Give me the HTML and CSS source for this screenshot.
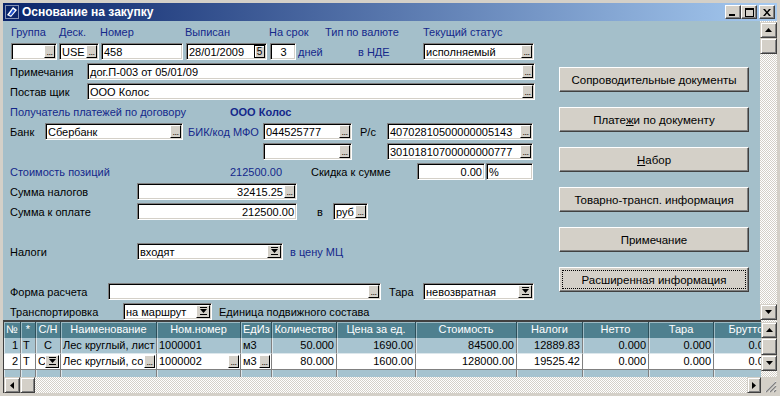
FILE: index.html
```html
<!DOCTYPE html>
<html lang="ru">
<head>
    <meta charset="UTF-8">
    <title>Основание на закупку</title>
    <link rel="stylesheet" href="styles.css">
</head>
<body>
<div class="window">
    <div class="titlebar">
        <svg class="title-icon" width="16" height="16" viewBox="0 0 16 16">
            <rect width="16" height="16" fill="#0a246a"/>
            <rect x="1.5" y="1.5" width="13" height="13" fill="none" stroke="#fff" stroke-dasharray="1 1"/>
            <path d="M3 11 L9 3 L13 6 L7 13 Z" fill="#fff"/>
            <path d="M5 11 L9 5 L11 6.5 L7 11.5 Z" fill="#2050c8"/>
        </svg>
        <span class="title-text">Основание на закупку</span>
        <div class="title-btn"><svg width="8" height="8" viewBox="0 0 8 8"><rect x="0" y="6" width="6" height="2"/></svg></div>
        <div class="title-btn"><svg width="9" height="9" viewBox="0 0 9 9"><path d="M0 0h9v9h-9z M1 2v6h7v-6z" fill-rule="evenodd"/></svg></div>
        <div class="title-btn close"><svg width="8" height="7" viewBox="0 0 8 7"><path d="M0 0h2l2 2.5 2-2.5h2l-3 3.5 3 3.5h-2l-2-2.5-2 2.5h-2l3-3.5z"/></svg></div>
    </div>

    <div class="client">
        <div class="upper">
            <div class="form">
                <div class="row">
                    <span class="lbl blue hl-group">Группа</span>
                    <span class="lbl blue hl-desk">Деск.</span>
                    <span class="lbl blue hl-num">Номер</span>
                    <span class="lbl blue hl-date">Выписан</span>
                    <span class="lbl blue hl-term">На срок</span>
                    <span class="lbl blue hl-cur">Тип по валюте</span>
                    <span class="lbl blue">Текущий статус</span>
                </div>
                <div class="row">
                    <div class="field in-group"><span class="val"></span><span class="dots">...</span></div>
                    <div class="field in-desk"><span class="val">USE</span><span class="dots">...</span></div>
                    <div class="field in-num"><span class="val">458</span></div>
                    <div class="field in-date"><span class="val">28/01/2009</span><span class="cal">5</span></div>
                    <div class="field in-term center"><span class="val">3</span></div>
                    <span class="lbl blue lbl-days">дней</span>
                    <span class="lbl blue lbl-nde">в НДЕ</span>
                    <div class="field in-status"><span class="val">исполняемый</span><span class="dots">...</span></div>
                </div>
                <div class="row">
                    <span class="lbl lbl-side">Примечания</span>
                    <div class="field in-wide"><span class="val">дог.П-003 от 05/01/09</span><span class="dots">...</span></div>
                </div>
                <div class="row">
                    <span class="lbl lbl-side">Постав щик</span>
                    <div class="field in-wide"><span class="val">ООО Колос</span><span class="dots">...</span></div>
                </div>
                <div class="row">
                    <span class="lbl blue lbl-payee">Получатель платежей по договору</span>
                    <span class="lbl blue strong">ООО Колос</span>
                </div>
                <div class="row">
                    <span class="lbl lbl-bank">Банк</span>
                    <div class="field in-bank"><span class="val">Сбербанк</span><span class="dots">...</span></div>
                    <span class="lbl blue lbl-bik">БИК/код МФО</span>
                    <div class="field in-bik"><span class="val">044525777</span><span class="dots">...</span></div>
                    <span class="lbl lbl-rs">Р/с</span>
                    <div class="field in-acc"><span class="val">40702810500000005143</span><span class="dots">...</span></div>
                </div>
                <div class="row">
                    <span class="pad-bik"></span>
                    <div class="field in-bik"><span class="val"></span><span class="dots">...</span></div>
                    <span class="gap-acc"></span>
                    <div class="field in-acc"><span class="val">30101810700000000777</span><span class="dots">...</span></div>
                </div>
                <div class="row">
                    <span class="lbl blue lbl-cost">Стоимость позиций</span>
                    <span class="lbl blue cost-value">212500.00</span>
                    <span class="lbl lbl-disc">Скидка к сумме</span>
                    <div class="field in-disc right"><span class="val">0.00</span></div>
                    <div class="field in-pct"><span class="val">%</span></div>
                </div>
                <div class="row">
                    <span class="lbl lbl-sum">Сумма налогов</span>
                    <div class="field in-sum right"><span class="val">32415.25</span><span class="dots">...</span></div>
                </div>
                <div class="row">
                    <span class="lbl lbl-sum">Сумма к оплате</span>
                    <div class="field in-sum right"><span class="val">212500.00</span></div>
                    <span class="lbl lbl-in">в</span>
                    <div class="field in-cur"><span class="val">руб</span><span class="dots">...</span></div>
                </div>
                <div class="row"></div>
                <div class="row">
                    <span class="lbl lbl-sum">Налоги</span>
                    <div class="field sel-tax"><span class="val">входят</span><span class="drop"><svg width="7" height="9" viewBox="0 0 7 9"><rect width="7" height="1"/><path d="M0 2h7l-3.5 4z"/><rect y="7" width="7" height="1"/></svg></span></div>
                    <span class="lbl blue lbl-mc">в цену МЦ</span>
                </div>
                <div class="row"></div>
                <div class="row">
                    <span class="lbl lbl-form">Форма расчета</span>
                    <div class="field in-form"><span class="val"></span><span class="dots">...</span></div>
                    <span class="lbl lbl-tara">Тара</span>
                    <div class="field sel-tara"><span class="val">невозвратная</span><span class="drop"><svg width="7" height="9" viewBox="0 0 7 9"><rect width="7" height="1"/><path d="M0 2h7l-3.5 4z"/><rect y="7" width="7" height="1"/></svg></span></div>
                </div>
                <div class="row">
                    <span class="lbl lbl-trans">Транспортировка</span>
                    <div class="field sel-trans"><span class="val">на маршрут</span><span class="drop"><svg width="7" height="9" viewBox="0 0 7 9"><rect width="7" height="1"/><path d="M0 2h7l-3.5 4z"/><rect y="7" width="7" height="1"/></svg></span></div>
                    <span class="lbl lbl-unit">Единица подвижного состава</span>
                </div>
            </div>

            <div class="actions">
                <div class="btn">Сопроводительные документы</div>
                <div class="btn">Плате<u>ж</u>и по документу</div>
                <div class="btn"><u>Н</u>абор</div>
                <div class="btn">Товарно-трансп. информация</div>
                <div class="btn">Примечание</div>
                <div class="btn focused">Расширенная информация</div>
            </div>

            <div class="vscroll checker">
                <div class="sb-btn"><svg width="7" height="4" viewBox="0 0 7 4"><path d="M3.5 0L7 4H0z"/></svg></div>
                <div class="sb-thumb"></div>
                <div class="sb-space"></div>
                <div class="sb-btn"><svg width="7" height="4" viewBox="0 0 7 4"><path d="M0 0h7L3.5 4z"/></svg></div>
            </div>
        </div>

        <div class="grid">
            <div class="grid-main">
                <div class="grow grid-head">
                    <div>№</div><div>*</div><div>С/Н</div><div>Наименование</div><div>Ном.номер</div><div>ЕдИз</div><div>Количество</div><div>Цена за ед.</div><div>Стоимость</div><div>Налоги</div><div>Нетто</div><div>Тара</div><div>Брутто</div>
                </div>
                <div class="grow grid-row">
                    <div class="r">1</div><div>Т</div><div class="c">С</div><div>Лес круглый, лист</div><div>1000001</div><div>м3</div><div class="r">50.000</div><div class="r">1690.00</div><div class="r">84500.00</div><div class="r">12889.83</div><div class="r">0.000</div><div class="r">0.000</div><div class="r">0.000</div>
                </div>
                <div class="grow grid-row edit">
                    <div class="r">2</div><div>Т</div>
                    <div class="cellbtn"><span>С</span><span class="drop"><svg width="7" height="9" viewBox="0 0 7 9"><rect width="7" height="1"/><path d="M0 2h7l-3.5 4z"/><rect y="7" width="7" height="1"/></svg></span></div>
                    <div class="cellbtn"><span>Лес круглый, со</span><span class="dots">...</span></div>
                    <div class="cellbtn"><span>1000002</span><span class="dots">...</span></div>
                    <div class="cellbtn"><span>м3</span><span class="dots">...</span></div>
                    <div class="r">80.000</div><div class="r">1600.00</div><div class="r">128000.00</div><div class="r">19525.42</div><div class="r">0.000</div><div class="r">0.000</div><div class="r">0.000</div>
                </div>
                <div class="grow grid-filler">
                    <div></div><div></div><div></div><div></div><div></div><div></div><div></div><div></div><div></div><div></div><div></div><div></div><div></div>
                </div>
                <div class="hscroll checker">
                    <div class="sb-btn"><svg width="4" height="7" viewBox="0 0 4 7"><path d="M0 3.5L4 0v7z"/></svg></div>
                    <div class="sb-thumb wide"></div>
                    <div class="sb-space"></div>
                    <div class="sb-btn narrow"><svg width="4" height="7" viewBox="0 0 4 7"><path d="M0 0l4 3.5L0 7z"/></svg></div>
                </div>
            </div>
            <div class="grid-vscroll checker">
                <div class="sb-btn"><svg width="7" height="4" viewBox="0 0 7 4"><path d="M3.5 0L7 4H0z"/></svg></div>
                <div class="sb-thumb tall"></div>
                <div class="sb-btn"><svg width="7" height="4" viewBox="0 0 7 4"><path d="M0 0h7L3.5 4z"/></svg></div>
                <div class="sb-space"></div>
                <div class="grip">
                    <svg width="16" height="16" viewBox="0 0 16 16">
                        <path d="M15 4L4 15M15 8L8 15M15 12L12 15" stroke="#fff" stroke-width="1"/>
                        <path d="M15 5L5 15M15 9L9 15M15 13L13 15" stroke="#808080" stroke-width="1.4"/>
                    </svg>
                </div>
            </div>
        </div>
    </div>
</div>
</body>
</html>
```

FILE: styles.css
```css
* {
    margin: 0;
    padding: 0;
    box-sizing: border-box;
}

body {
    font-family: "Liberation Sans", Arial, sans-serif;
    font-size: 11px;
    background: #d4d0c8;
    width: 780px;
    height: 396px;
    overflow: hidden;
}

.window {
    width: 780px;
    height: 396px;
    padding: 3px;
    background: #d4d0c8;
    display: flex;
    flex-direction: column;
}

/* title bar */
.titlebar {
    height: 18px;
    flex: none;
    display: flex;
    align-items: center;
    padding-left: 1px;
    background: linear-gradient(90deg, #0a246a 0%, #a6caf0 100%);
    color: #fff;
    font-weight: bold;
    font-size: 12px;
}

.title-icon {
    flex: none;
    margin-right: 2px;
}

.title-text {
    flex: 1;
}

.title-btn {
    width: 16px;
    height: 14px;
    flex: none;
    display: flex;
    align-items: center;
    justify-content: center;
    background: #d4d0c8;
    border: 1px solid;
    border-color: #fff #404040 #404040 #fff;
    box-shadow: inset -1px -1px #808080;
}

.title-btn.close {
    margin: 0 2px 0 2px;
}

.client {
    flex: 1;
    display: flex;
    flex-direction: column;
}

/* upper form area */
.upper {
    height: 299px;
    flex: none;
    display: flex;
    background: #a4bfca;
    overflow: hidden;
}

.form {
    width: 549px;
    flex: none;
    padding: 2px 0 0 7px;
}

.row {
    height: 17px;
    margin-bottom: 3px;
    display: flex;
    align-items: center;
}

.lbl {
    flex: none;
    white-space: nowrap;
    color: #000;
}

.blue {
    color: #14288a;
}

.strong {
    font-weight: bold;
}

.hl-group { width: 49px; padding-left: 1px; }
.hl-desk { width: 41px; }
.hl-num { width: 85px; }
.hl-date { width: 84px; }
.hl-term { width: 56px; }
.hl-cur { width: 98px; }

.field {
    height: 17px;
    flex: none;
    display: flex;
    align-items: center;
    padding: 0 1px 0 1px;
    background: #fff;
    border: 1px solid;
    border-color: #808080 #fff #fff #808080;
    box-shadow: inset 1px 1px #000, inset -1px -1px #d4d0c8;
    white-space: nowrap;
    overflow: hidden;
    color: #000;
}

.field .val {
    flex: 1;
    padding-left: 1px;
    overflow: hidden;
}

.field.right .val {
    text-align: right;
    padding-right: 1px;
}

.field.center .val {
    text-align: center;
}

.dots {
    width: 11px;
    height: 13px;
    flex: none;
    display: flex;
    align-items: flex-end;
    justify-content: center;
    background: #d4d0c8;
    border: 1px solid;
    border-color: #fff #000 #000 #fff;
    font-size: 9px;
    line-height: 10px;
    letter-spacing: -0.5px;
    color: #000;
}

.drop {
    width: 14px;
    height: 13px;
    flex: none;
    display: flex;
    align-items: center;
    justify-content: center;
    background: #d4d0c8;
    border: 1px solid;
    border-color: #fff #000 #000 #fff;
}

.cal {
    width: 11px;
    height: 13px;
    flex: none;
    display: flex;
    align-items: center;
    justify-content: center;
    border: 1px solid #000;
    background: #d4d0c8;
    box-shadow: inset 1px 1px #fff;
    font-size: 10px;
}

.in-group { width: 46px; margin-left: 1px; }
.in-desk { width: 40px; margin-left: 2px; }
.in-num { width: 82px; margin-left: 2px; }
.in-date { width: 81px; margin-left: 3px; }
.in-term { width: 26px; margin-left: 3px; }
.lbl-days { width: 60px; margin-left: 2px; }
.lbl-nde { width: 65px; }
.in-status { width: 111px; }

.lbl-side { width: 77px; }
.in-wide { width: 448px; }

.lbl-payee { width: 220px; }

.lbl-bank { width: 35px; }
.in-bank { width: 138px; }
.lbl-bik { width: 75px; margin-left: 5px; }
.in-bik { width: 89px; }
.lbl-rs { width: 27px; margin-left: 8px; }
.in-acc { width: 146px; }
.pad-bik { width: 253px; flex: none; }
.gap-acc { width: 35px; flex: none; }

.lbl-cost { width: 208px; }
.cost-value { width: 64px; text-align: right; }
.lbl-disc { width: 106px; margin-left: 29px; }
.in-disc { width: 68px; }
.in-pct { width: 47px; margin-left: 1px; }

.lbl-sum { width: 127px; }
.in-sum { width: 160px; }
.lbl-in { width: 16px; margin-left: 20px; }
.in-cur { width: 35px; }

.sel-tax { width: 146px; }
.lbl-mc { margin-left: 7px; }

.lbl-form { width: 98px; }
.in-form { width: 273px; }
.lbl-tara { width: 34px; margin-left: 8px; }
.sel-tara { width: 111px; }

.lbl-trans { width: 113px; }
.sel-trans { width: 89px; }
.lbl-unit { margin-left: 7px; }

/* right buttons */
.actions {
    flex: 1;
    padding: 46px 0 0 7px;
}

.btn {
    width: 190px;
    height: 25px;
    margin-bottom: 15px;
    display: flex;
    align-items: center;
    justify-content: center;
    background: #d4d0c8;
    border: 1px solid;
    border-color: #fff #404040 #404040 #fff;
    box-shadow: inset -1px -1px #808080;
    color: #000;
    font-size: 11.5px;
}

.btn.focused {
    outline: 1px dotted #000;
    outline-offset: -4px;
}

/* scrollbars */
.checker {
    background-color: #fff;
    background-image: conic-gradient(#d4d0c8 25%, transparent 0 50%, #d4d0c8 0 75%, transparent 0);
    background-size: 2px 2px;
}

.vscroll {
    width: 17px;
    flex: none;
    display: flex;
    flex-direction: column;
    padding-top: 1px;
}

.sb-btn {
    width: 16px;
    height: 16px;
    flex: none;
    display: flex;
    align-items: center;
    justify-content: center;
    background: #d4d0c8;
    border: 1px solid;
    border-color: #d4d0c8 #404040 #404040 #d4d0c8;
    box-shadow: inset 1px 1px #fff, inset -1px -1px #808080;
}

.vscroll .sb-btn,
.vscroll .sb-thumb {
    width: 17px;
}

.sb-thumb {
    width: 16px;
    height: 16px;
    flex: none;
    background: #d4d0c8;
    border: 1px solid;
    border-color: #d4d0c8 #404040 #404040 #d4d0c8;
    box-shadow: inset 1px 1px #fff, inset -1px -1px #808080;
}

.sb-thumb.tall {
    height: 17px;
}

.sb-thumb.wide {
    width: 15px;
    height: 16px;
}

.sb-space {
    flex: 1;
}

/* grid */
.grid {
    height: 73px;
    flex: none;
    display: flex;
    background: #d4d0c8;
}

.grid-main {
    width: 758px;
    flex: none;
    display: flex;
    flex-direction: column;
    overflow: hidden;
    border-top: 2px solid #404040;
    border-left: 1px solid #404040;
    background: #a6c3cf;
}

.grow {
    display: grid;
    grid-template-columns: 17px 15px 25px 96px 84px 31px 65px 79px 101px 66px 66px 65px 65px;
    flex: none;
}

.grow > div {
    white-space: nowrap;
    overflow: hidden;
    padding: 0 2px;
    border-right: 1px solid #808080;
}

.grid-head {
    height: 16px;
    background: #4f808f;
    color: #fff;
}

.grid-head > div {
    text-align: center;
    line-height: 15px;
    border-right: 1px solid #2d4f5a;
    box-shadow: inset 1px 1px #9cbac4;
}

.grid-row {
    height: 16px;
    background: #a8c4d0;
    color: #000;
}

.grid-row > div {
    line-height: 15px;
    border-bottom: 1px solid #dce7ec;
    box-shadow: inset 1px 0 #dce7ec;
}

.grid-row.edit {
    background: #fff;
}

.grid-row.edit > div {
    border-bottom: 1px solid #808080;
    box-shadow: none;
}

.grow > .r {
    text-align: right;
}

.grow > .c {
    text-align: center;
}

.grid-row > .cellbtn {
    display: flex;
    align-items: center;
    justify-content: space-between;
    padding: 0 1px 0 2px;
}

.cellbtn span:first-child {
    overflow: hidden;
}

.grid-filler {
    height: 7px;
}

.grid-filler > div {
    box-shadow: inset 1px 0 #dce7ec;
}

.hscroll {
    height: 16px;
    flex: none;
    display: flex;
}

.sb-btn.narrow {
    width: 14px;
}

.grid-vscroll {
    width: 16px;
    flex: none;
    display: flex;
    flex-direction: column;
    padding-top: 2px;
}

.grip {
    width: 16px;
    height: 16px;
    flex: none;
    background: #d4d0c8;
}
```
